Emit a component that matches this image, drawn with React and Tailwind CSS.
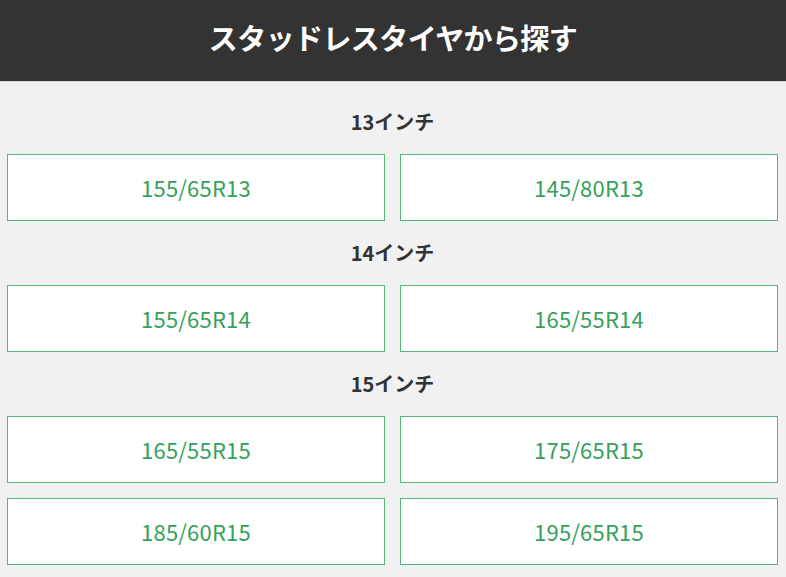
const sections = [
  { title: '13インチ', sizes: ['155/65R13', '145/80R13'] },
  { title: '14インチ', sizes: ['155/65R14', '165/55R14'] },
  { title: '15インチ', sizes: ['165/55R15', '175/65R15', '185/60R15', '195/65R15'] },
];

export default function App() {
  return (
    <div
      className="min-h-screen bg-[#f1f1f1] text-[#333]"
      style={{ fontFamily: '"Noto Sans CJK JP", "Noto Sans", sans-serif' }}
    >
      <header className="h-[82px] bg-[#333] border-b border-[#d9d9d9] flex items-center justify-center pb-[6px]">
        <h1 className="text-[29px] font-bold text-white tracking-[-0.6px]">スタッドレスタイヤから探す</h1>
      </header>

      <div className="pl-[7px] pr-[8px] pt-[8px]">
        {sections.map((s) => (
          <section key={s.title}>
            <h2 className="h-[64px] flex items-center justify-center text-[20px] font-bold text-[#333]">
              {s.title}
            </h2>
            <div className="grid grid-cols-2 gap-x-[15px] gap-y-[15px]">
              {s.sizes.map((size) => (
                <a
                  key={size}
                  href="#"
                  className="h-[67px] bg-white border border-[#55b77a] flex items-center justify-center text-[22px] font-normal tracking-[0.2px] text-[#36a05c]"
                >
                  {size}
                </a>
              ))}
            </div>
          </section>
        ))}
      </div>
    </div>
  );
}
